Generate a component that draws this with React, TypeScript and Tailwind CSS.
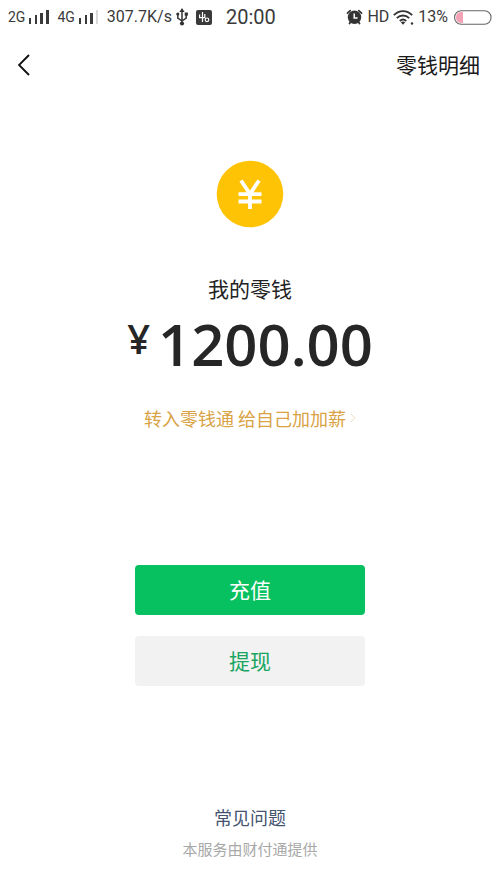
const cjk = "font-['Noto_Sans_CJK_SC',sans-serif]";

function SignalBars({ weakLast = false }: { weakLast?: boolean }) {
  return (
    <svg viewBox="0 0 20 15" className="h-[15px] w-5" fill="#3a3a3a" aria-hidden="true">
      <rect x="0" y="8" width="2" height="6" />
      <rect x="6" y="5" width="2" height="9" />
      <rect x="11" y="3" width="3" height="11" />
      <rect x="17" y="0" width={weakLast ? 2 : 3} height="14" fill={weakLast ? "#d9d9d9" : "#3a3a3a"} />
    </svg>
  );
}

function UsbIcon() {
  return (
    <svg viewBox="0 0 12 18" className="h-[18px] w-3" fill="none" stroke="#333" strokeWidth="1.5" aria-hidden="true">
      <path d="M6 3v12M6 13 1.8 10V6.5M6 13l4.2-3V6" />
      <path d="M6 0 3.4 4h5.2z" fill="#333" stroke="none" />
      <circle cx="6" cy="15.5" r="2.1" fill="#333" stroke="none" />
      <circle cx="1.8" cy="6" r="1.6" fill="#333" stroke="none" />
      <path d="M8.7 4.5h3.2v3.2H8.7z" fill="#333" stroke="none" />
    </svg>
  );
}

function AppBadgeIcon() {
  return (
    <svg viewBox="0 0 16 15" className="h-[15px] w-4" aria-hidden="true">
      <rect width="16" height="15" rx="2" fill="#3a3a3a" />
      <path d="M6.5 2v10M3.6 4.5v3.2h5.200V4" fill="none" stroke="#fff" strokeWidth="1.2" />
      <circle cx="11" cy="9.8" r="1.8" fill="none" stroke="#fff" strokeWidth="1.2" />
    </svg>
  );
}

function AlarmIcon() {
  return (
    <svg viewBox="0 0 17 16" className="h-4 w-[17px]" aria-hidden="true">
      <path d="M1.5 4.2 4.2 1.7M15.500 4.200l-2.700-2.500M4.500 13 3.500 14.500M12.500 13l1 1.500" stroke="#333" strokeWidth="1.8" strokeLinecap="round" />
      <circle cx="8.5" cy="8.3" r="6.7" fill="#333" />
      <path d="M8.2 4.6V9h3.4" fill="none" stroke="#fff" strokeWidth="1.5" />
    </svg>
  );
}

function WifiIcon() {
  return (
    <svg viewBox="0 0 21 15" className="h-[15px] w-[21px]" fill="none" stroke="#333" strokeWidth="1.8" aria-hidden="true">
      <path d="M.8 5.2c5.4-5.4 13-5.4 18.4 0M3.8 8.2c3.6-3.6 8.8-3.6 12.4 0M6.8 11c2-2 4.4-2 6.4 0" />
      <path d="M7.8 12.2c1.3-1 3.1-1 4.4 0L10 14.7z" fill="#333" stroke="none" />
      <circle cx="19" cy="13.5" r="1.2" fill="#333" stroke="none" />
    </svg>
  );
}

function BatteryIcon() {
  return (
    <svg viewBox="0 0 38 15" className="h-[15px] w-[38px]" aria-hidden="true">
      <path d="M9 2v11H7a5 5 0 0 1-5-5V7a5 5 0 0 1 5-5z" fill="#f3a3b5" />
      <rect x=".6" y=".8" width="36.400" height="13.4" rx="6.5" fill="none" stroke="#666" strokeWidth="1.1" />
    </svg>
  );
}

function StatusBar() {
  return (
    <header className="flex h-[34px] items-center justify-between px-2 font-['Roboto',sans-serif] text-[#3a3a3a]">
      <div className="flex items-center">
        <span className="text-sm">2G</span>
        <span className="ml-1"><SignalBars /></span>
        <span className="ml-2 text-sm">4G</span>
        <span className="ml-1"><SignalBars weakLast /></span>
        <span className="ml-2 text-base">307.7K/s</span>
        <span className="ml-1"><UsbIcon /></span>
        <span className="ml-2"><AppBadgeIcon /></span>
        <span className="ml-3.5 text-xl">20:00</span>
      </div>
      <div className="flex items-center">
        <AlarmIcon />
        <span className="ml-1 text-base">HD</span>
        <span className="ml-1"><WifiIcon /></span>
        <span className="ml-1 text-base">13%</span>
        <span className="ml-1.5"><BatteryIcon /></span>
      </div>
    </header>
  );
}

function CoinIcon() {
  return (
    <svg viewBox="0 0 68 68" className="size-[68px]" aria-hidden="true">
      <circle cx="34" cy="34" r="33.3" fill="#fdc304" />
      <path d="m25 20.5 9 13.5 9-13.5M34 33v16M22.5 34.2h23M22.5 41.5h23" fill="none" stroke="#fff" strokeWidth="3.8" />
    </svg>
  );
}

export default function App() {
  return (
    <div className={`flex min-h-screen flex-col bg-white ${cjk}`}>
      <StatusBar />

      <nav className="flex h-[62px] items-center justify-between px-5">
        <button type="button" aria-label="返回" className="-ml-1.5 p-1">
          <svg viewBox="0 0 12 22" className="h-[22px] w-3" fill="none" stroke="#111" strokeWidth="1.9" aria-hidden="true">
            <path d="M11 1 1 11l10 10" />
          </svg>
        </button>
        <a href="#details" className="text-[21px] text-[#1a1a1a]">零钱明细</a>
      </nav>

      <main className="flex flex-col items-center pt-16">
        <CoinIcon />
        <h1 className="mt-11 text-[21px] leading-8 text-[#222]">我的零钱</h1>
        <p className="mt-2 flex items-start gap-2 font-['Open_Sans',sans-serif] font-semibold text-[#262626]">
          <span className="text-[40px] leading-[54px]">¥</span>
          <span className="text-[58px] leading-[64px]">1200.00</span>
        </p>
        <a href="#lqt" className="mt-7 flex items-center gap-1 text-lg leading-7 text-[#d9a345]">
          转入零钱通 给自己加加薪
          <svg viewBox="0 0 6 10" className="h-2.5 w-1.5" fill="none" stroke="#f0dfc2" strokeWidth="1" aria-hidden="true">
            <path d="m1 1 4 4-4 4" />
          </svg>
        </a>

        <div className="mt-[133px] flex w-[46%] flex-col gap-[21px] text-[21px]">
          <button type="button" className="h-[50px] rounded bg-[#07c160] text-white">充值</button>
          <button type="button" className="h-[50px] rounded bg-[#f2f2f2] text-[#18a561]">提现</button>
        </div>
      </main>

      <footer className="mt-auto flex flex-col items-center pb-6">
        <a href="#faq" className="text-lg leading-8 text-[#44536f]">常见问题</a>
        <p className="text-[15px] leading-8 text-[#a8a8a8]">本服务由财付通提供</p>
      </footer>
    </div>
  );
}
